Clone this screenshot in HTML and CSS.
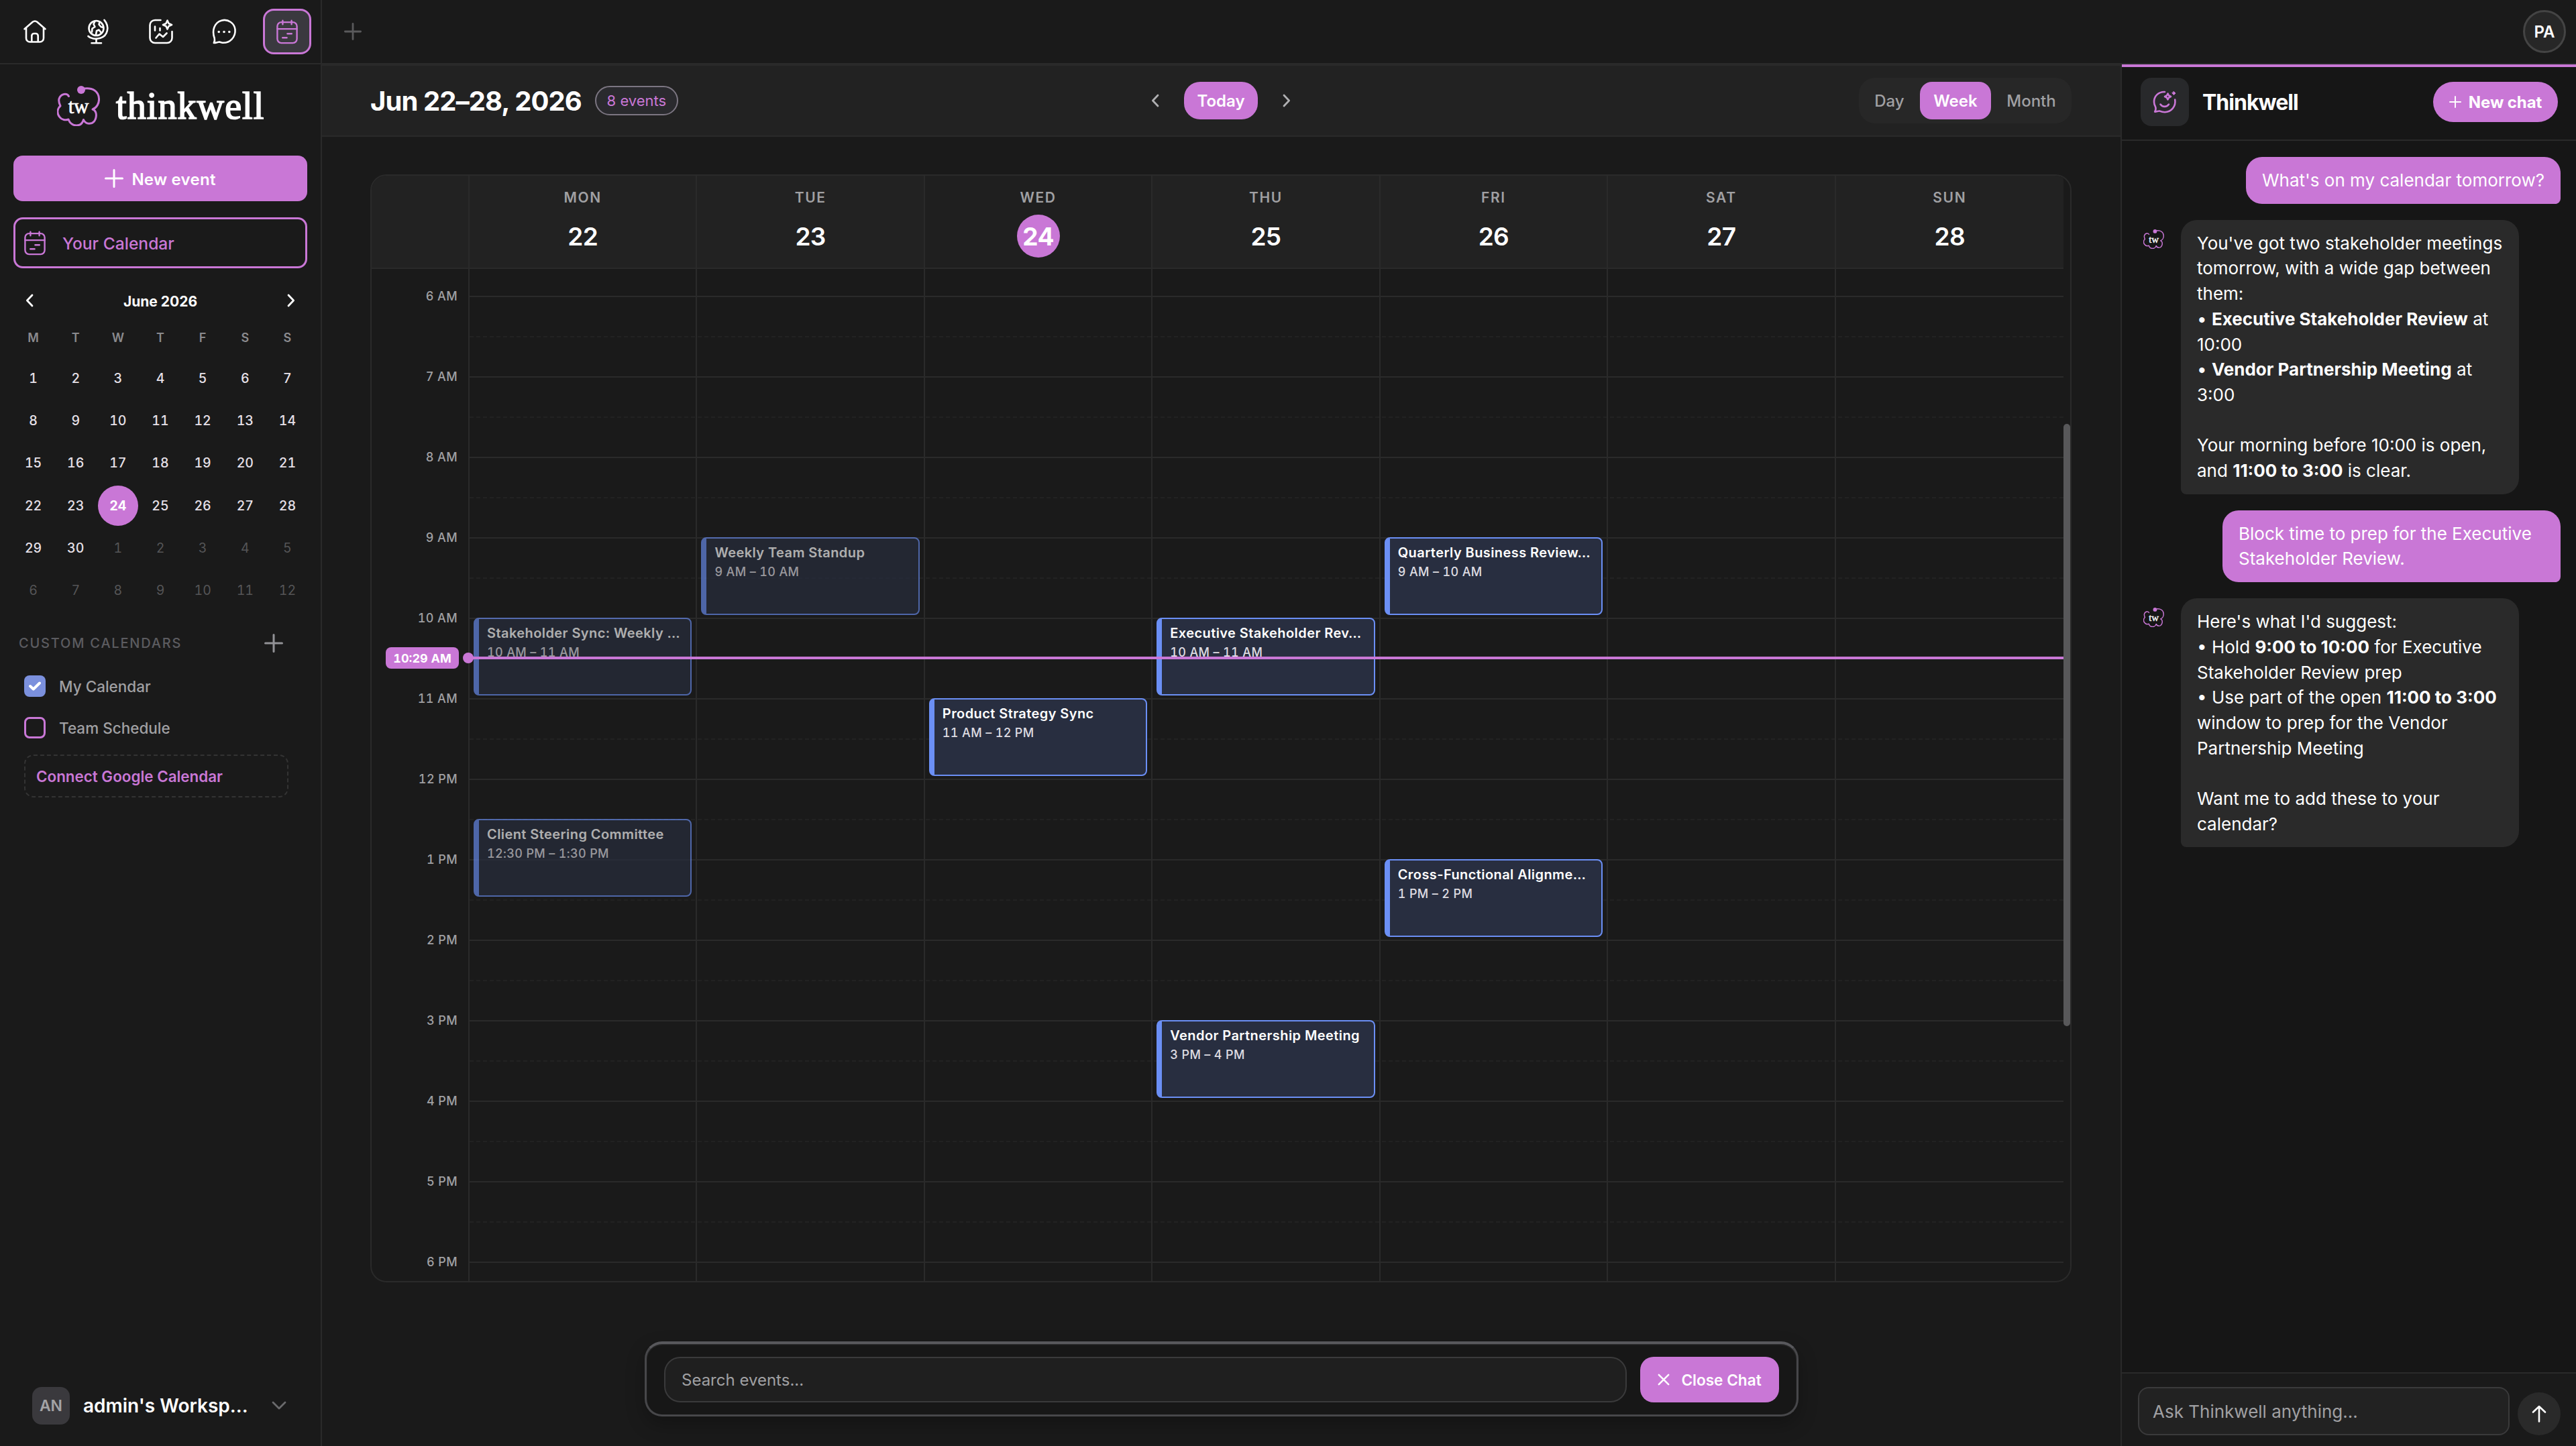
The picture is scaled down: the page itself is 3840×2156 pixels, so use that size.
FILE: index.html
```html
<!DOCTYPE html>
<html lang="en">
<head>
<meta charset="utf-8">
<title>Thinkwell Calendar</title>
<link rel="stylesheet" href="styles.css">
</head>
<body>
<svg class="sprite" width="0" height="0" aria-hidden="true">
  <symbol id="i-calendar" viewBox="0 0 32 36"><g fill="none" stroke="currentColor" stroke-width="2.4" stroke-linecap="round" stroke-linejoin="round"><rect x="1.4" y="3.6" width="29.2" height="31" rx="6"/><path d="M1.4 13.6h29.2M9.4 1.2v5.6M22.6 1.2v5.6M16.4 20.8h6.4M9.2 26.8h6.4"/></g></symbol>
  <symbol id="i-plus" viewBox="0 0 28 28"><path d="M14 1.5v25M1.5 14h25" fill="none" stroke="currentColor" stroke-width="3" stroke-linecap="round"/></symbol>
  <symbol id="i-left" viewBox="0 0 12 20"><path d="M10 2L2.4 10l7.6 8" fill="none" stroke="currentColor" stroke-width="2.8" stroke-linecap="round" stroke-linejoin="round"/></symbol>
  <symbol id="i-right" viewBox="0 0 12 20"><path d="M2 2l7.6 8L2 18" fill="none" stroke="currentColor" stroke-width="2.8" stroke-linecap="round" stroke-linejoin="round"/></symbol>
  <symbol id="i-cloud" viewBox="0 0 64 60"><path d="M17.500 15.500C15 10.500 5.500 11 3 19.500C2 24 3.500 27 5 30C1 33 -1 40 3.500 46C7 51 13 51.500 17 50C19 56 24 59 29 59C34 59 38 56 39.500 50.500C42 56 47 57 52 55.500C58 53 59.500 44 57.500 39C56.500 37 55 35.500 53 35C59 33 63 26 62.500 19C62 9 54 1 37 4.500" fill="none" stroke="#c977d6" stroke-width="3" stroke-linejoin="round" stroke-linecap="round"/><circle cx="36" cy="6" r="6" fill="#c977d6"/><text x="32" y="40.500" text-anchor="middle" font-family="Liberation Serif, serif" font-size="31" letter-spacing="-.3" fill="#fff" stroke="#fff" stroke-width=".7">tw</text></symbol>
</svg>
<div class="app">
  <aside class="sidebar">
    <nav class="rail">
      <a class="rail-item"><svg width="34" height="34" viewBox="0 0 34 34" fill="none" stroke="currentColor" stroke-width="2.6" stroke-linecap="round" stroke-linejoin="round"><path d="M1.500 13.200L13.600 2.800a5.200 5.200 0 0 1 6.800 0L32.500 13.200M4 11.500v15.500a5.500 5.500 0 0 0 5.500 5.500h15a5.500 5.500 0 0 0 5.500-5.500V11.500M12.300 32.500V23.500a3.500 3.500 0 0 1 3.500-3.500h2.400a3.500 3.500 0 0 1 3.500 3.500v9"/></svg></a>
      <a class="rail-item"><svg width="34" height="38" viewBox="0 0 34 38" fill="none" stroke="currentColor" stroke-width="2.600" stroke-linecap="round" stroke-linejoin="round"><circle cx="14.500" cy="14" r="11"/><path d="M26.500 1.800C35 12 31.500 25.500 20.500 28.800C13 31 6 29.500 2.500 26M14.500 30v6M7.500 36.200h14.500M12.500 3.500L10.500 8l2 4-4 2.500-.5 5M19.500 4.500l-1 4 3 3.500 3.500 1M14 24l1-6 3.500-1.500 3.500 4.500"/></svg></a>
      <a class="rail-item"><svg width="36" height="38" viewBox="0 0 36 38" fill="none" stroke="currentColor" stroke-width="2.600" stroke-linecap="round" stroke-linejoin="round"><path d="M17.500 2H9a7.500 7.500 0 0 0-7.500 7.500v19A7.500 7.500 0 0 0 9 36h18a7.500 7.500 0 0 0 7.500-7.500V19M9 11.500v6M16.500 14v3.500M10.500 28.500l5-6 5.500 4.500 5.500-5.500M27.500 2.500l2 4.500 4.500 2-4.500 2-2 4.500-2-4.500-4.500-2 4.500-2z"/></svg></a>
      <a class="rail-item"><svg width="36" height="38" viewBox="0 0 36 38" fill="none" stroke="currentColor" stroke-width="2.600" stroke-linecap="round" stroke-linejoin="round"><path d="M2.800 36c1.200-2.300 1.600-4.500.9-7C-.5 17.500 3.500 5.500 14.500 2.500c9.500-2.500 19 4 20 13.500 1 11-7.500 20.500-19 19.700-1.500-.2-3-.7-4.500-1.200-2.600.2-5 1.500-8.200 1.500z"/><path stroke-width="3.600" d="M10.200 19.500h.01M18 19.500h.01M25.800 19.500h.01"/></svg></a>
      <a class="rail-item rail-active"><svg width="32" height="37"><use href="#i-calendar"/></svg></a>
    </nav>
    <div class="brand"><svg width="64" height="60"><use href="#i-cloud"/></svg><span class="wordmark">thinkwell</span></div>
    <button class="new-event"><svg width="28" height="28"><use href="#i-plus"/></svg><span>New event</span></button>
    <a class="your-cal"><svg width="32" height="37"><use href="#i-calendar"/></svg><span>Your Calendar</span></a>
    <div class="month-head"><svg width="12" height="20"><use href="#i-left"/></svg><span>June 2026</span><svg width="12" height="20"><use href="#i-right"/></svg></div>
    <div class="mini mini-dow"><span>M</span><span>T</span><span>W</span><span>T</span><span>F</span><span>S</span><span>S</span></div>
    <div class="mini mini-days">
      <span>1</span><span>2</span><span>3</span><span>4</span><span>5</span><span>6</span><span>7</span>
      <span>8</span><span>9</span><span>10</span><span>11</span><span>12</span><span>13</span><span>14</span>
      <span>15</span><span>16</span><span>17</span><span>18</span><span>19</span><span>20</span><span>21</span>
      <span>22</span><span>23</span><span class="today">24</span><span>25</span><span>26</span><span>27</span><span>28</span>
      <span>29</span><span>30</span><span class="out">1</span><span class="out">2</span><span class="out">3</span><span class="out">4</span><span class="out">5</span>
      <span class="out">6</span><span class="out">7</span><span class="out">8</span><span class="out">9</span><span class="out">10</span><span class="out">11</span><span class="out">12</span>
    </div>
    <div class="section"><span>CUSTOM CALENDARS</span><svg width="28" height="28"><use href="#i-plus"/></svg></div>
    <label class="cal-row"><i class="box box-on"><svg width="18" height="14" viewBox="0 0 18 14"><path d="M2 7l4.800 4.500L16 2.500" fill="none" stroke="#fff" stroke-width="4" stroke-linecap="round" stroke-linejoin="round"/></svg></i><span>My Calendar</span></label>
    <label class="cal-row"><i class="box"></i><span>Team Schedule</span></label>
    <a class="connect"><span>Connect Google Calendar</span></a>
    <div class="workspace"><span class="ws-badge">AN</span><span class="ws-name">admin's Worksp...</span><svg width="22" height="14" viewBox="0 0 22 14"><path d="M2 2l9 9 9-9" fill="none" stroke="#6a6a6c" stroke-width="2.800" stroke-linecap="round" stroke-linejoin="round"/></svg></div>
  </aside>

  <div class="content">
    <header class="tabs"><svg width="26" height="26"><use href="#i-plus"/></svg><span class="avatar">PA</span></header>
    <div class="split">
      <main class="main">
        <div class="toolbar">
          <div class="tb-left"><h1>Jun 22–28, 2026</h1><span class="count">8 events</span></div>
          <div class="tb-mid"><svg width="12" height="20"><use href="#i-left"/></svg><button class="today-btn">Today</button><svg width="12" height="20"><use href="#i-right"/></svg></div>
          <div class="tb-right"><div class="seg"><span class="seg-day">Day</span><span class="seg-week">Week</span><span class="seg-month">Month</span></div></div>
        </div>
        <section class="calendar">
          <div class="cal-scroll">
            <div class="cal-head">
              <div class="corner"></div>
              <div class="dh"><span>MON</span><b>22</b></div>
              <div class="dh"><span>TUE</span><b>23</b></div>
              <div class="dh dh-now"><span>WED</span><b>24</b></div>
              <div class="dh"><span>THU</span><b>25</b></div>
              <div class="dh"><span>FRI</span><b>26</b></div>
              <div class="dh"><span>SAT</span><b>27</b></div>
              <div class="dh"><span>SUN</span><b>28</b></div>
            </div>
            <div class="cal-body">
              <div class="hour"><span>6 AM</span><i></i></div>
              <div class="hour"><span>7 AM</span><i></i></div>
              <div class="hour"><span>8 AM</span><i></i></div>
              <div class="hour"><span>9 AM</span><i></i></div>
              <div class="hour"><span>10 AM</span><i></i></div>
              <div class="hour"><span>11 AM</span><i></i></div>
              <div class="hour"><span>12 PM</span><i></i></div>
              <div class="hour"><span>1 PM</span><i></i></div>
              <div class="hour"><span>2 PM</span><i></i></div>
              <div class="hour"><span>3 PM</span><i></i></div>
              <div class="hour"><span>4 PM</span><i></i></div>
              <div class="hour"><span>5 PM</span><i></i></div>
              <div class="hour"><span>6 PM</span><i></i></div>
              <div class="days">
                <div class="day">
                  <article class="event past h10"><h3>Stakeholder Sync: Weekly …</h3><p>10 AM – 11 AM</p></article>
                  <article class="event past h1230"><h3>Client Steering Committee</h3><p>12:30 PM – 1:30 PM</p></article>
                </div>
                <div class="day"><article class="event past h9"><h3>Weekly Team Standup</h3><p>9 AM – 10 AM</p></article></div>
                <div class="day"><article class="event h11"><h3>Product Strategy Sync</h3><p>11 AM – 12 PM</p></article></div>
                <div class="day">
                  <article class="event h10"><h3>Executive Stakeholder Rev…</h3><p>10 AM – 11 AM</p></article>
                  <article class="event h15"><h3>Vendor Partnership Meeting</h3><p>3 PM – 4 PM</p></article>
                </div>
                <div class="day">
                  <article class="event h9"><h3>Quarterly Business Review…</h3><p>9 AM – 10 AM</p></article>
                  <article class="event h13"><h3>Cross-Functional Alignme…</h3><p>1 PM – 2 PM</p></article>
                </div>
                <div class="day"></div>
                <div class="day"></div>
              </div>
              <div class="now"><span class="now-label">10:29 AM</span><i class="now-dot"></i></div>
            </div>
          </div>
          <div class="scrollbar"><i></i></div>
        </section>
        <div class="dock">
          <div class="search"><span>Search events...</span></div>
          <button class="close-chat"><svg width="18" height="18" viewBox="0 0 20 20"><path d="M2 2l16 16M18 2L2 18" fill="none" stroke="#fff" stroke-width="2.800" stroke-linecap="round"/></svg><span>Close Chat</span></button>
        </div>
      </main>
      <aside class="chat">
        <header class="chat-head">
          <span class="chat-icon"><svg width="36" height="34" viewBox="0 0 36 34" fill="none" stroke="currentColor" stroke-width="2.600" stroke-linecap="round" stroke-linejoin="round"><path d="M18 2C8.500 1.500 1.800 8.500 2 17c0 3 1.200 5.800 2.200 7.600.8 2.200.3 4.600-1 7 2.800.1 4.800-1.400 7.400-1 2.200 1 4.600 1.600 7.400 1.600 9.500 0 17-8.500 15.200-18.700M11.500 20.500c3 4.500 9.500 4.500 12.500 0"/><path d="M22.500 4.500l1.500 3 3 1.500-3 1.500-1.500 3-1.500-3-3-1.500 3-1.500z"/><path d="M31.500 1.500l2.500 2.500-2.500 2.500-2.500-2.500z" fill="currentColor" stroke-width="1"/></svg></span>
          <h2>Thinkwell</h2>
          <button class="new-chat"><svg width="18" height="18"><use href="#i-plus"/></svg><span>New chat</span></button>
        </header>
        <div class="thread">
          <div class="msg me"><p>What's on my calendar tomorrow?</p></div>
          <div class="msg bot"><svg width="31" height="29"><use href="#i-cloud"/></svg><p>You've got two stakeholder meetings<br>tomorrow, with a wide gap between<br>them:<br>• <b>Executive Stakeholder Review</b> at<br>10:00<br>• <b>Vendor Partnership Meeting</b> at<br>3:00<br><br>Your morning before 10:00 is open,<br>and <b>11:00 to 3:00</b> is clear.</p></div>
          <div class="msg me"><p>Block time to prep for the Executive Stakeholder Review.</p></div>
          <div class="msg bot"><svg width="31" height="29"><use href="#i-cloud"/></svg><p>Here's what I'd suggest:<br>• Hold <b>9:00 to 10:00</b> for Executive<br>Stakeholder Review prep<br>• Use part of the open <b>11:00 to 3:00</b><br>window to prep for the Vendor<br>Partnership Meeting<br><br>Want me to add these to your<br>calendar?</p></div>
        </div>
        <footer class="composer"><div class="ask">Ask Thinkwell anything...</div><button class="send"><svg width="22" height="26" viewBox="0 0 22 26"><path d="M11 24.500V2M2 10.500L11 2l9 8.500" fill="none" stroke="#fff" stroke-width="2.600" stroke-linecap="round" stroke-linejoin="round"/></svg></button></footer>
      </aside>
    </div>
  </div>
</div>
</body>
</html>
```
FILE: styles.css
```css
* { box-sizing: border-box; margin: 0; padding: 0; }
html, body { height: 100%; }
body { background: #1a1a1a; color: #fff; font-family: Inter, "Liberation Sans", sans-serif; font-size: 24px; overflow: hidden; }
button { border: 0; font: inherit; color: #fff; background: #c977d6; }
svg { display: block; flex: none; overflow: visible; }
i { font-style: normal; display: block; }
.sprite { position: absolute; }

.app { display: flex; width: 3840px; height: 2156px; }
.sidebar { width: 480px; flex: none; border-right: 2px solid #2a2a2a; display: flex; flex-direction: column; }
.content { flex: 1; min-width: 0; display: flex; flex-direction: column; }

/* icon rail */
.rail { height: 96px; border-bottom: 2px solid #2a2a2a; display: flex; align-items: center; padding-left: 16px; gap: 22px; flex: none; }
.rail-item { width: 72px; height: 68px; display: grid; place-items: center; border-radius: 16px; }
.rail-active { border: 3px solid #c977d6; background: #3a393f; color: #c977d6; }

/* brand */
.brand { height: 136px; display: flex; align-items: center; padding: 0 0 12px 85px; gap: 24px; flex: none; }
.wordmark { font-family: "Liberation Serif", serif; font-size: 56px; line-height: 60px; letter-spacing: 1.1px; -webkit-text-stroke: 1.7px #fff; }

.new-event { margin: 0 20px; height: 68px; border-radius: 14px; display: flex; align-items: center; justify-content: center; gap: 12px; font-weight: 600; font-size: 24px; letter-spacing: .25px; flex: none; }
.new-event span, .your-cal span, .month-head span { padding-top: 2px; }
.your-cal { margin: 24px 20px 0; height: 76px; border: 3px solid #c977d6; border-radius: 14px; display: flex; align-items: center; gap: 25px; padding-left: 13px; color: #c977d6; font-size: 24.600px; font-weight: 500; flex: none; }

/* mini month */
.month-head { height: 96px; padding: 0 38px; display: flex; align-items: center; justify-content: space-between; font-size: 21px; font-weight: 700; flex: none; }
.mini { display: grid; grid-template-columns: repeat(7, 1fr); margin: 0 18px; text-align: center; flex: none; }
.mini-dow { height: 36px; margin-top: -10px; line-height: 36px; font-size: 18px; font-weight: 600; color: #8a8a8e; }
.mini-days { margin-top: 10px; grid-auto-rows: 63.300px; align-items: center; justify-items: center; font-size: 19.500px; font-weight: 500; font-variant-numeric: tabular-nums; color: #e6e0e8; }
.mini-days .today { width: 60px; height: 60px; line-height: 60px; border-radius: 50%; background: #c977d6; color: #fff; font-weight: 700; }
.mini-days .out { color: #555557; font-weight: 400; }

.section { margin: 31px 56px 0 28px; height: 32px; display: flex; align-items: center; justify-content: space-between; font-size: 20px; font-weight: 500; letter-spacing: 1.800px; color: #5c5c60; flex: none; }
.section svg { color: #929296; }
.cal-row { height: 62px; padding-left: 36px; display: flex; align-items: center; gap: 20px; font-size: 22.500px; font-weight: 500; color: #a0a0a3; flex: none; }
.cal-row span, .connect span { padding-top: 2px; }
.section + .cal-row { margin-top: 17px; }
.box { width: 32px; height: 32px; border: 3px solid #c977d6; border-radius: 8px; display: grid; place-items: center; }
.box-on { border: 0; background: #7b90dd; }
.connect { margin: 9px 48px 0 36px; height: 64px; border: 2px dashed #333; border-radius: 14px; display: flex; align-items: center; padding-left: 16px; color: #c977d6; font-size: 22.400px; font-weight: 600; flex: none; }
.workspace { margin: auto 0 32px 48px; display: flex; align-items: center; height: 56px; flex: none; }
.ws-badge { width: 56px; height: 56px; border-radius: 14px; background: #3a393d; color: #a3a3a5; display: grid; place-items: center; font-weight: 600; font-size: 23px; }
.ws-name { margin-left: 20px; width: 281px; font-size: 28px; font-weight: 600; }

/* top strip */
.tabs { height: 96px; border-bottom: 2px solid #2a2a2a; display: flex; align-items: center; justify-content: space-between; padding: 0 15px 0 33px; color: #5a5a5c; flex: none; }
.avatar { width: 64px; height: 64px; border-radius: 50%; border: 3px solid #444; background: #272727; color: #fff; display: grid; place-items: center; font-size: 24px; font-weight: 600; }
.split { flex: 1; display: flex; min-height: 0; }
.main { flex: 1; min-width: 0; display: flex; flex-direction: column; }

.toolbar { height: 108px; border-top: 2px solid #2a2a2a; border-bottom: 2px solid #2a2a2a; background: #222; padding: 0 73px 0 72px; display: grid; grid-template-columns: 1fr auto 1fr; align-items: center; flex: none; }
.tb-left { display: flex; align-items: center; gap: 20px; }
h1 { font-size: 40px; font-weight: 700; letter-spacing: -.9px; white-space: nowrap; }
.count { width: 124px; height: 44px; border: 2px solid #7c7682; border-radius: 22px; background: #2a2a2e; color: #c977d6; font-size: 22px; display: grid; place-items: center; }
.tb-mid { display: flex; align-items: center; gap: 37px; color: #b0b0b2; }
.today-btn { width: 110px; height: 56px; border-radius: 24px; font-size: 24px; font-weight: 600; }
.tb-right { display: flex; justify-content: flex-end; }
.seg { height: 68px; display: flex; align-items: center; border-radius: 24px; background: #272727; font-size: 24px; font-weight: 500; color: #a0a0a3; }
.seg span { height: 56px; display: grid; place-items: center; border-radius: 18px; }
.seg-day { width: 91px; }
.seg .seg-week { width: 106px; background: #c977d6; color: #fff; font-weight: 600; }
.seg-month { width: 120px; }

/* week grid */
.calendar { margin: 56px 73px 0 72px; height: 1652px; border: 2px solid #2a2a2a; border-radius: 24px; overflow: hidden; display: flex; flex: none; }
.cal-scroll { flex: 1; min-width: 0; display: flex; flex-direction: column; }
.cal-head { height: 139px; border-bottom: 2px solid #2a2a2a; display: grid; grid-template-columns: 146px repeat(7, 1fr); background: #222; flex: none; }
.corner { border-right: 2px solid #2a2a2a; }
.dh { border-right: 2px solid #2a2a2a; display: flex; flex-direction: column; align-items: center; padding-top: 20px; }
.dh:last-child, .day:last-child { border-right: 0; }
.dh span { font-size: 21px; line-height: 25px; font-weight: 600; letter-spacing: 1.600px; color: #a0a0a3; }
.dh b { margin-top: 13px; width: 64px; height: 64px; line-height: 65px; text-align: center; border-radius: 50%; font-size: 37px; font-weight: 600; letter-spacing: -.6px; }
.dh-now { background: #1f1f1f; }
.dh-now b { background: #c977d6; font-weight: 700; }
.cal-body { flex: 1; position: relative; padding-top: 40px; overflow: hidden; }
.hour { height: 120px; display: grid; grid-template-columns: 146px 1fr; }
.hour span { margin-top: -12px; height: 26px; line-height: 26px; padding-right: 18px; text-align: right; font-size: 18px; font-weight: 500; letter-spacing: .4px; font-variant-numeric: tabular-nums; color: #a0a0a3; }
.hour i { border-top: 2px solid #2a2a2a; }
.hour i::after { content: ""; display: block; margin-top: 58px; border-top: 2px dashed #222; }
.days { position: absolute; inset: 0 0 0 144px; border-left: 2px solid #2a2a2a; display: grid; grid-template-columns: repeat(7, 1fr); }
.day { border-right: 2px solid #2a2a2a; position: relative; }
.event { position: absolute; left: 6px; right: 6px; height: 116px; border: 2px solid #6b8ff5; border-left-width: 8px; border-radius: 8px; background: #282e40; padding: 8px 6px 0 12px; white-space: nowrap; overflow: hidden; }
.event h3 { font-size: 20px; line-height: 26px; font-weight: 600; letter-spacing: .42px; }
.event p { font-size: 18px; line-height: 24px; margin-top: 4px; font-weight: 500; letter-spacing: .35px; font-variant-numeric: tabular-nums; color: #dedce2; }
.past { opacity: .65; }
.h9 { top: 400px; }
.h10 { top: 520px; }
.h11 { top: 640px; }
.h1230 { top: 820px; }
.h13 { top: 880px; }
.h15 { top: 1120px; }
.now { position: absolute; left: 144px; right: 0; top: 578px; height: 4px; background: #c977d6; }
.now-dot { position: absolute; left: -8px; top: -6px; width: 16px; height: 16px; border-radius: 50%; background: #c977d6; }
.now-label { position: absolute; left: -123px; top: -14px; width: 109px; height: 32px; border-radius: 8px; background: #c977d6; display: grid; place-items: center; font-size: 18px; font-weight: 700; font-variant-numeric: tabular-nums; }
.scrollbar { width: 10px; padding-top: 370px; }
.scrollbar i { width: 10px; height: 898px; border-radius: 5px; background: #58585a; }

/* search dock */
.dock { margin: 88px 0 0 481px; width: 1720px; height: 112px; border: 3px solid #47474a; border-top: 4px solid #58585c; border-radius: 26px; background: #171717; box-shadow: inset 0 1px 2px #333, 0 12px 28px rgba(0, 0, 0, .25); display: flex; align-items: center; gap: 20px; padding: 0 26px; }
.search { flex: 1; height: 68px; border: 2px solid #3a3a3b; border-radius: 24px; background: #1f1f1f; display: flex; align-items: center; padding-left: 24px; color: #a0a0a3; font-size: 24px; }
.close-chat { width: 207px; height: 68px; border-radius: 20px; display: flex; align-items: center; justify-content: center; gap: 17px; font-size: 22.600px; font-weight: 600; white-space: nowrap; }
.search span, .close-chat span { padding-top: 1px; }

/* chat */
.chat { width: 679px; flex: none; border-left: 2px solid #2a2a2a; background: #161616; display: flex; flex-direction: column; }
.chat-head { height: 114px; border-top: 4px solid #c977d6; border-bottom: 2px solid #2a2a2a; display: flex; align-items: center; padding: 0 27px 4px 28px; flex: none; }
.chat-icon { width: 72px; height: 72px; border-radius: 16px; background: #28292b; color: #c977d6; display: grid; place-items: center; }
h2 { margin-left: 20px; font-size: 32px; font-weight: 700; letter-spacing: -1px; flex: 1; }
.new-chat { width: 186px; height: 60px; border-radius: 30px; display: flex; align-items: center; justify-content: center; gap: 11px; font-size: 24px; font-weight: 700; letter-spacing: -.1px; white-space: nowrap; }
.thread { flex: 1; min-height: 0; padding: 24px 23px 0 32px; display: flex; flex-direction: column; gap: 24px; font-size: 26px; line-height: 37.700px; }
.msg { display: flex; }
.msg p { padding: 16px 24px; max-width: 504px; border-radius: 24px; }
.msg b { font-weight: 700; }
.me { justify-content: flex-end; }
.me p { background: #c977d6; border-bottom-right-radius: 8px; }
.bot p { width: 504px; background: #2a2a2a; border-bottom-left-radius: 8px; margin-left: 25px; white-space: nowrap; }
.bot svg { margin-top: 14px; }
.composer { height: 110px; border-top: 2px solid #2a2a2a; background: #1a1a1a; display: flex; align-items: flex-end; gap: 12px; padding: 0 23px 16px 24px; flex: none; }
.ask { flex: 1; height: 72px; border: 2px solid #3a3a3b; border-radius: 16px; background: #222; display: flex; align-items: center; padding-left: 20px; font-size: 26px; color: #a0a0a3; }
.send { width: 64px; height: 64px; border-radius: 50%; background: #2a2a2a; display: grid; place-items: center; }
```
